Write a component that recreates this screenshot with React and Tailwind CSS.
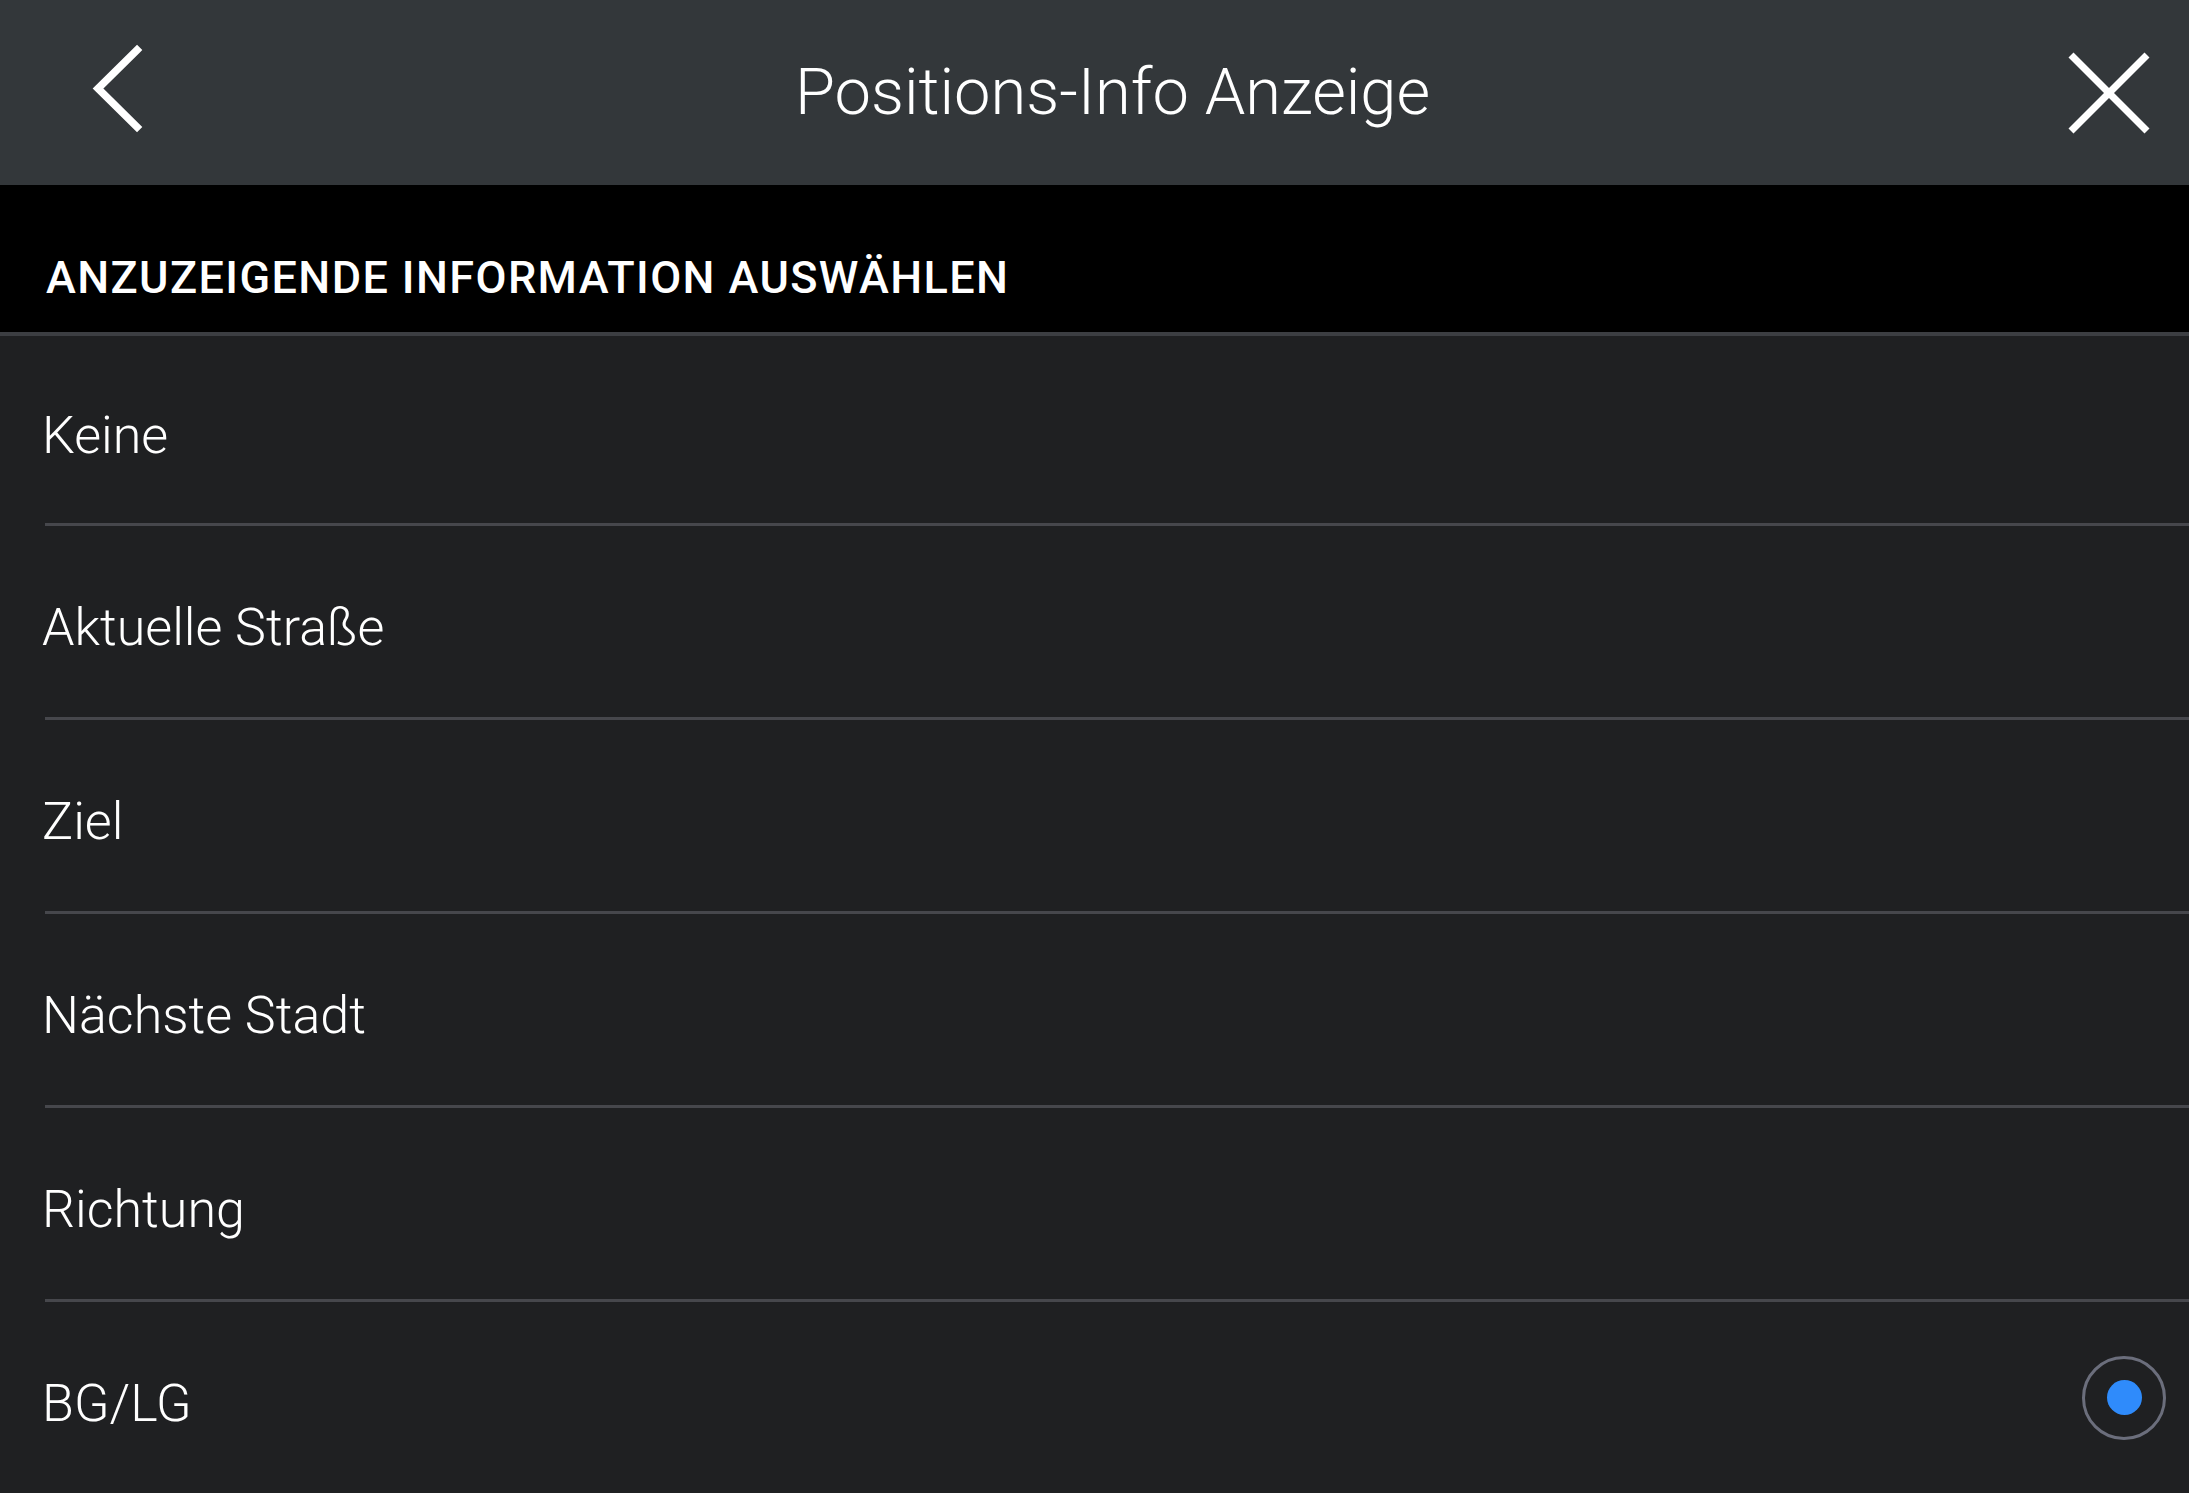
import React, { useState } from 'react';

const options = ['Keine', 'Aktuelle Straße', 'Ziel', 'Nächste Stadt', 'Richtung', 'BG/LG'];

const App = () => {
    const [selected, setSelected] = useState('BG/LG');

    return (
        <div className="w-full min-h-screen bg-[#1f2022] overflow-hidden" style={{ fontFamily: 'Roboto, "Liberation Sans", sans-serif' }}>
            {/* top bar */}
            <div className="h-[185px] bg-[#33373a] flex items-center justify-between">
                <button className="w-[200px] h-full flex items-center pl-[86px]">
                    <svg width="60" height="100" viewBox="0 0 60 100" fill="none">
                        <polyline points="51,7 12,45.5 51,84" stroke="white" strokeWidth="7.5" strokeLinecap="square" strokeLinejoin="miter" />
                    </svg>
                </button>
                <h1 className="flex-1 text-center text-white font-light text-[65px] leading-none pl-[36px]">Positions-Info Anzeige</h1>
                <button className="w-[200px] h-full flex items-center justify-end pr-[38px]">
                    <svg width="84" height="84" viewBox="0 0 84 84" fill="none">
                        <line x1="4" y1="4" x2="80" y2="80" stroke="white" strokeWidth="7" />
                        <line x1="80" y1="4" x2="4" y2="80" stroke="white" strokeWidth="7" />
                    </svg>
                </button>
            </div>

            {/* section header */}
            <div className="h-[147px] bg-black pt-[65px] pl-[46px]">
                <h2 className="text-white font-medium text-[45px] leading-[56px] tracking-[1.4px]">ANZUZEIGENDE INFORMATION AUSWÄHLEN</h2>
            </div>
            <div className="h-[4px] bg-[#3c3e42]"></div>

            {/* options */}
            <div>
                {options.map((opt, index) => (
                    <div key={opt}>
                        <div
                            onClick={() => setSelected(opt)}
                            className={`${index === 0 ? 'h-[187px]' : 'h-[191px]'} flex items-center justify-between pl-[42px] pr-[23px] cursor-pointer`}
                        >
                            <span className="text-white font-light text-[52px] leading-[61px] pt-[12px]">{opt}</span>
                            {selected === opt && (
                                <span className="w-[84px] h-[84px] rounded-full border-[3px] border-[#6b6e7c] flex items-center justify-center">
                                    <span className="w-[35px] h-[35px] rounded-full bg-[#2f8bfb]"></span>
                                </span>
                            )}
                        </div>
                        {index < options.length - 1 && <div className="h-[3px] ml-[45px] bg-[#46474c]"></div>}
                    </div>
                ))}
            </div>
        </div>
    );
};

export default App;
